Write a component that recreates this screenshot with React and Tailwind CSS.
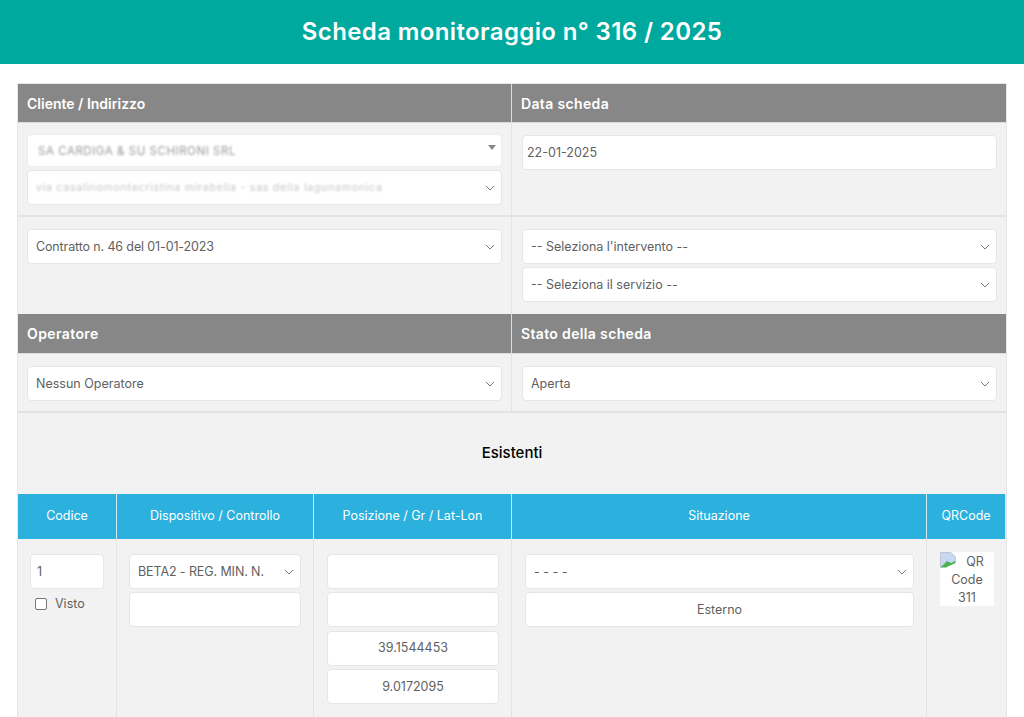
const font = { fontFamily: '"Inter", "Liberation Sans", sans-serif' };

function Chevron() {
  return (
    <svg className="absolute top-1/2 -translate-y-1/2 right-[6px]" width="10" height="6" viewBox="0 0 10 6" fill="none">
      <path d="M1 1l4 4 4-4" stroke="#777" strokeWidth="1" />
    </svg>
  );
}

function Box({ children, chevron, className = "", center }) {
  return (
    <div className={`relative h-[35px] shrink-0 bg-white rounded-[4px] border border-[#e6e6e6] flex items-center pt-[1px] text-[12.5px] text-[#5f5f5f] ${center ? "justify-center" : "px-2"} ${className}`}>
      {children}
      {chevron && <Chevron />}
    </div>
  );
}

function GrayHead({ children, className = "" }) {
  return (
    <div className={`bg-[#878787] flex items-center text-white text-[14px] font-semibold border-b border-[#dcdcdc] ${className}`}>
      {children}
    </div>
  );
}

function BlueHead({ children, className = "" }) {
  return (
    <div className={`bg-[#2cb1de] text-white text-[12.5px] flex items-center justify-center border-r border-[#d5e9f2] last:border-r-0 ${className}`}>
      {children}
    </div>
  );
}

export default function App() {
  return (
    <div className="bg-white h-[717px] overflow-hidden" style={font}>
      <div className="h-[64px] bg-[#00a99d] flex items-center justify-center text-white text-[24px] font-semibold tracking-[0.38px]">
        Scheda monitoraggio n° 316 / 2025
      </div>

      <div className="ml-[17px] w-[990px] mt-[19px] bg-[#f2f2f2] border-t border-x border-[#e6e6e6]">
        <div className="grid grid-cols-[494px_494px]">
          <div className="border-r border-[#dcdcdc]">
            <GrayHead className="h-[39px] pl-[9px]">Cliente / Indirizzo</GrayHead>
          </div>
          <GrayHead className="h-[39px] pl-[9px] tracking-[0.35px]">Data scheda</GrayHead>

          <div className="h-[94px] border-r border-b-2 border-[#e3e3e3] pl-[9px] pr-[9px] pt-[11px] flex flex-col gap-[3px]">
            <div className="relative h-[33px] bg-white rounded-[4px] border border-[#ececec] flex items-center pt-[2px] px-[10px]">
              <span className="text-[11.5px] text-[#999] blur-[1.1px] tracking-[0.55px]">SA CARDIGA &amp; SU SCHIRONI SRL</span>
              <span className="absolute right-[5px] top-[10px] w-0 h-0 border-x-[4px] border-x-transparent border-t-[5px] border-t-[#888]" />
            </div>
            <div className="relative h-[35px] bg-white rounded-[4px] border border-[#e6e6e6] flex items-center px-[8px]">
              <span className="text-[10.5px] text-[#c4c4c4] blur-[1px] tracking-[0.77px]">via casalinomontecristina mirabella - sas della lagunamonica</span>
              <Chevron />
            </div>
          </div>
          <div className="h-[94px] border-b-2 border-[#e3e3e3] pl-[10px] pr-[9px] pt-[12px]">
            <Box>
              <span className="-ml-[4px]">22-01-2025</span>
            </Box>
          </div>

          <div className="h-[97px] border-r border-[#e3e3e3] pl-[9px] pr-[9px] pt-[12px]">
            <Box chevron>
              <span className="tracking-[-0.13px]">Contratto n. 46 del 01-01-2023</span>
            </Box>
          </div>
          <div className="h-[97px] pl-[10px] pr-[9px] pt-[12px] flex flex-col gap-[3px]">
            <Box chevron>-- Seleziona l'intervento --</Box>
            <Box chevron>-- Seleziona il servizio --</Box>
          </div>

          <div className="border-r border-[#dcdcdc]">
            <GrayHead className="h-[40px] pl-[9px] tracking-[0.4px]">Operatore</GrayHead>
          </div>
          <GrayHead className="h-[40px] pl-[9px] tracking-[0.35px]">Stato della scheda</GrayHead>

          <div className="h-[59px] border-r border-b-2 border-[#e3e3e3] pl-[9px] pr-[9px] pt-[12px]">
            <Box chevron>Nessun Operatore</Box>
          </div>
          <div className="h-[59px] border-b-2 border-[#e3e3e3] pl-[10px] pr-[9px] pt-[12px]">
            <Box chevron>Aperta</Box>
          </div>
        </div>

        <div className="h-[81px] flex items-center justify-center text-[15px] font-medium text-black">Esistenti</div>

        <div className="grid grid-cols-[99px_197px_198px_415px_79px]">
          <BlueHead className="h-[45px]">Codice</BlueHead>
          <BlueHead>Dispositivo / Controllo</BlueHead>
          <BlueHead>Posizione / Gr / Lat-Lon</BlueHead>
          <BlueHead>Situazione</BlueHead>
          <BlueHead>QRCode</BlueHead>

          <div className="h-[178px] border-r border-[#e3e3e3] pl-[12px] pr-[12px] pt-[15px]">
            <Box className="!px-[6px]">1</Box>
            <label className="flex items-center mt-[6px] pl-[5px] text-[12.5px] text-[#5f5f5f]">
              <span className="w-[12px] h-[12px] bg-white border border-[#777] rounded-[2px]" />
              <span className="ml-[8px]">Visto</span>
            </label>
          </div>
          <div className="border-r border-[#e3e3e3] px-[12px] pt-[15px] flex flex-col gap-[3.3px]">
            <Box chevron>
              <span className="tracking-[-0.1px]">BETA2 - REG. MIN. N.</span>
            </Box>
            <Box />
          </div>
          <div className="border-r border-[#e3e3e3] pl-[13px] pr-[12px] pt-[15px] flex flex-col gap-[3.3px]">
            <Box />
            <Box />
            <Box center>39.1544453</Box>
            <Box center>9.0172095</Box>
          </div>
          <div className="border-r border-[#e3e3e3] pl-[13px] pr-[12px] pt-[15px] flex flex-col gap-[3.3px]">
            <Box chevron>- - - -</Box>
            <Box center>Esterno</Box>
          </div>
          <div className="pl-[13px] pr-[12px] pt-[13px]">
            <div className="relative w-[54px] h-[54px] bg-white text-center text-[12.5px] leading-[18px] pt-[1px] text-[#5f5f5f]">
              <svg className="absolute left-0 top-0" width="16" height="16" viewBox="0 0 16 16">
                <path d="M0.5 0.5H11L15.5 5V11L0.5 15.5Z" fill="#c9d8f2" stroke="#aab" strokeWidth="0.6" />
                <path d="M1 15L7 9L11 11L15 9V11L6 15.5H1Z" fill="#4caf50" />
              </svg>
              <span className="pl-[16px]">QR</span>
              <br />
              Code
              <br />
              311
            </div>
          </div>
        </div>
      </div>
    </div>
  );
}
